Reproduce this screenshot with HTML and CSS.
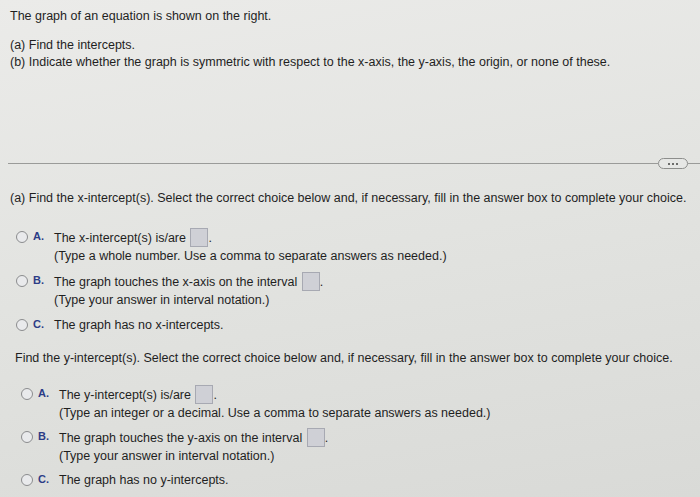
FILE: index.html
```html
<!DOCTYPE html>
<html>
<head>
<meta charset="utf-8">
<link rel="stylesheet" href="styles.css">
</head>
<body>
<div class="page">
  <div class="intro">
    <p class="lead">The graph of an equation is shown on the right.</p>
    <p class="parts">(a) Find the intercepts.<br>(b) Indicate whether the graph is symmetric with respect to the x-axis, the y-axis, the origin, or none of these.</p>
  </div>
  <div class="divider">
    <div class="rule"></div>
    <div class="pill"><span></span><span></span><span></span></div>
  </div>
  <div class="qa">
    <p class="prompt">(a) Find the x-intercept(s). Select the correct choice below and, if necessary, fill in the answer box to complete your choice.</p>
    <div class="choices">
      <div class="choice">
        <span class="radio"></span><span class="letter">A.</span>
        <div class="ctext">
          <div>The x-intercept(s) is/are <span class="box"></span>.</div>
          <div>(Type a whole number. Use a comma to separate answers as needed.)</div>
        </div>
      </div>
      <div class="choice">
        <span class="radio"></span><span class="letter">B.</span>
        <div class="ctext">
          <div>The graph touches the x-axis on the interval <span class="box"></span>.</div>
          <div>(Type your answer in interval notation.)</div>
        </div>
      </div>
      <div class="choice">
        <span class="radio"></span><span class="letter">C.</span>
        <div class="ctext">
          <div>The graph has no x-intercepts.</div>
        </div>
      </div>
    </div>
  </div>
  <div class="qb">
    <p class="prompt">Find the y-intercept(s). Select the correct choice below and, if necessary, fill in the answer box to complete your choice.</p>
    <div class="choices">
      <div class="choice">
        <span class="radio"></span><span class="letter">A.</span>
        <div class="ctext">
          <div>The y-intercept(s) is/are <span class="box"></span>.</div>
          <div>(Type an integer or a decimal. Use a comma to separate answers as needed.)</div>
        </div>
      </div>
      <div class="choice">
        <span class="radio"></span><span class="letter">B.</span>
        <div class="ctext">
          <div>The graph touches the y-axis on the interval <span class="box"></span>.</div>
          <div>(Type your answer in interval notation.)</div>
        </div>
      </div>
      <div class="choice">
        <span class="radio"></span><span class="letter">C.</span>
        <div class="ctext">
          <div>The graph has no y-intercepts.</div>
        </div>
      </div>
    </div>
  </div>
</div>
</body>
</html>
```
FILE: styles.css
```css
html, body {
  margin: 0;
  padding: 0;
}
body {
  width: 700px;
  height: 497px;
  overflow: hidden;
  background: linear-gradient(170deg, #ebebe9 0%, #e2e3e0 50%, #d9dad7 100%);
  font-family: "Liberation Sans", Arial, sans-serif;
  font-size: 12.5px;
  color: #1f1f1f;
}
p { margin: 0; }
.page {
  display: flex;
  flex-direction: column;
}
.intro {
  padding: 8px 0 0 10px;
}
.lead {
  line-height: 16px;
}
.parts {
  margin-top: 13px;
  line-height: 17px;
}
.divider {
  margin-top: 87px;
  display: flex;
  align-items: center;
  padding-left: 8px;
}
.rule {
  flex: 1;
  height: 1px;
  background: #9a9b99;
}
.pill {
  width: 28px;
  height: 9px;
  border: 1px solid #8d8e8c;
  border-radius: 6px;
  display: flex;
  align-items: center;
  justify-content: center;
  gap: 2px;
  margin-right: 12px;
  background: #e6e7e5;
}
.pill span {
  width: 2px;
  height: 2px;
  background: #6c6d6b;
}
.divider::after {
  content: "";
  width: 12px;
  height: 1px;
  background: #9a9b99;
  margin-left: -12px;
}
.qa {
  padding: 21px 0 0 10px;
}
.qb {
  padding: 9px 0 0 15px;
}
.prompt {
  line-height: 16px;
}
.qa .choices {
  margin-top: 22px;
  padding-left: 6px;
}
.qb .choices {
  margin-top: 19px;
  padding-left: 6px;
}
.choice {
  display: flex;
  align-items: flex-start;
  margin-bottom: 7px;
}
.qb .choice {
  margin-bottom: 6px;
}
.radio {
  width: 10px;
  height: 10px;
  border: 1.5px solid #8b8c8e;
  border-radius: 50%;
  background: #e9eaec;
  margin-top: 3px;
  flex: none;
}
.letter {
  width: 21px;
  margin-left: 5px;
  font-size: 11px;
  font-weight: bold;
  color: #2c3c86;
  flex: none;
  line-height: 16px;
}
.ctext {
  line-height: 18px;
}
.box {
  display: inline-block;
  width: 16px;
  height: 17px;
  border: 1px solid #a7a9b2;
  background: #cfd0d6;
  vertical-align: -5px;
  margin-left: 1px;
}
```
